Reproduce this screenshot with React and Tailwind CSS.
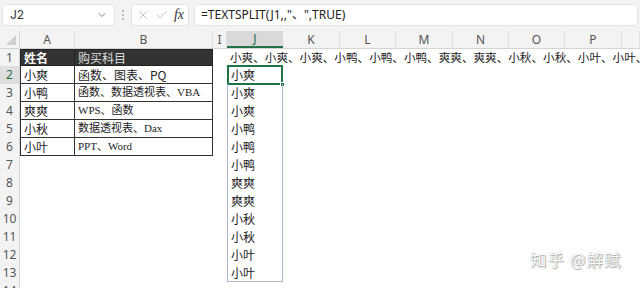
import { ChevronDown, X, Check } from 'lucide-react';

const cols = [
    { key: 'A', w: 'w-[55px]' },
    { key: 'B', w: 'w-[138px]' },
    { key: 'I', w: 'w-[14px]' },
    { key: 'J', w: 'w-[56px]' },
    { key: 'K', w: 'w-[57px]' },
    { key: 'L', w: 'w-[56px]' },
    { key: 'M', w: 'w-[57px]' },
    { key: 'N', w: 'w-[56px]' },
    { key: 'O', w: 'w-[56px]' },
    { key: 'P', w: 'w-[57px]' },
    { key: 'Q', w: 'flex-1' },
];

const table = [
    ['小爽', '函数、图表、PQ', false],
    ['小鸭', '函数、数据透视表、VBA', true],
    ['爽爽', 'WPS、函数', true],
    ['小秋', '数据透视表、Dax', true],
    ['小叶', 'PPT、Word', true],
];

const spill = ['小爽', '小爽', '小爽', '小鸭', '小鸭', '小鸭', '爽爽', '爽爽', '小秋', '小秋', '小叶', '小叶'];

const cjk = "font-['Noto_Sans_CJK_SC','Noto_Sans',sans-serif]";

export default function App() {
    const rows = Array.from({ length: 14 }, (_, i) => i + 1);

    return (
        <div className={`w-[640px] h-[288px] overflow-hidden bg-white relative ${cjk}`}>
            {/* Formula bar */}
            <div className="h-[31px] bg-[#f3f3f3] flex items-center gap-[5px] px-[2px] pb-[2px]">
                <div className="w-[113px] h-[22px] bg-white rounded-[3px] border border-[#e3e3e3] flex items-center justify-between pl-[7px] pr-[6px]">
                    <span className="text-[12px] text-[#333] font-['Inter',sans-serif]">J2</span>
                    <ChevronDown className="w-[12px] h-[12px] text-[#555]" strokeWidth={1.5} />
                </div>
                <div className="flex flex-col gap-[2px] px-[2px]">
                    <span className="w-[2px] h-[2px] bg-[#aaa] rounded-full" />
                    <span className="w-[2px] h-[2px] bg-[#aaa] rounded-full" />
                    <span className="w-[2px] h-[2px] bg-[#aaa] rounded-full" />
                </div>
                <div className="w-[58px] h-[22px] bg-white rounded-[3px] border border-[#e3e3e3] flex items-center gap-[5px] px-[4px]">
                    <X className="w-[14px] h-[14px] text-[#aaa]" strokeWidth={1.2} />
                    <Check className="w-[14px] h-[14px] text-[#aaa]" strokeWidth={1.2} />
                    <span className="text-[14px] italic text-[#333] font-['Liberation_Serif',serif] leading-none">fx</span>
                </div>
                <div className="flex-1 h-[22px] bg-white rounded-[3px] border border-[#e3e3e3] flex items-center pl-[6px]">
                    <span className="text-[12px] text-[#222] font-['Noto_Sans','Noto_Sans_CJK_SC',sans-serif]">=TEXTSPLIT(J1,,"、",TRUE)</span>
                </div>
            </div>

            {/* Column headers */}
            <div className="flex h-[18px] bg-[#f3f3f3] border-b border-[#d4d4d4]">
                <div className="w-[20px] flex items-end justify-end pr-[3px] pb-[3px] border-r border-[#d4d4d4]">
                    <div className="w-0 h-0 border-l-[10px] border-l-transparent border-b-[10px] border-b-[#cfcfcf]" />
                </div>
                {cols.map((c) => (
                    <div
                        key={c.key}
                        className={`${c.w} shrink-0 flex items-center justify-center text-[12px] font-['Noto_Sans',sans-serif] ${
                            c.key === 'J'
                                ? 'bg-[#d9d9d9] text-[#1e6b41] border-b-2 border-[#217346]'
                                : 'text-[#555] border-r border-[#e0e0e0]'
                        }`}
                    >
                        {c.key === 'Q' ? '' : c.key}
                    </div>
                ))}
            </div>

            {/* Rows */}
            {rows.map((r) => (
                <div key={r} className={`flex ${r === 1 ? 'h-[17px]' : 'h-[18px]'}`}>
                    <div
                        className={`w-[20px] shrink-0 flex items-center justify-center text-[12px] font-['Noto_Sans',sans-serif] border-r border-[#d4d4d4] ${
                            r === 2 ? 'bg-[#dedede] text-[#1e6b41]' : 'bg-[#f3f3f3] text-[#555]'
                        }`}
                    >
                        {r}
                    </div>
                    <CellA r={r} />
                    <CellB r={r} />
                    <div className="w-[14px] shrink-0" />
                    <CellJ r={r} />
                    <div className="flex-1" />
                </div>
            ))}

            {/* Watermark */}
            <div className="absolute right-[18px] bottom-[17px] text-[16px] text-white tracking-[1.5px] [text-shadow:0_0_1px_#888,1px_1px_1px_#aaa]">
                知乎 @解赋
            </div>
        </div>
    );
}

function CellA({ r }) {
    if (r === 1) {
        return (
            <div className="w-[55px] shrink-0 bg-[#333] border-l border-r border-t border-b border-[#222] flex items-center pl-[3px] text-[12px] font-bold text-white">
                姓名
            </div>
        );
    }
    if (r <= 6) {
        return (
            <div className="w-[55px] shrink-0 border-l border-r border-b border-[#333] flex items-center pl-[3px] text-[12px] text-[#222]">
                {table[r - 2][0]}
            </div>
        );
    }
    return <div className="w-[55px] shrink-0" />;
}

function CellB({ r }) {
    if (r === 1) {
        return (
            <div className="w-[138px] shrink-0 bg-[#333] border-r border-t border-b border-[#222] flex items-center pl-[3px] text-[12px] text-[#ddd]">
                购买科目
            </div>
        );
    }
    if (r <= 6) {
        const [, text, serif] = table[r - 2];
        return (
            <div
                className={`w-[138px] shrink-0 border-r border-b border-[#333] flex items-center pl-[3px] whitespace-nowrap text-[#222] ${
                    serif ? "text-[11px] font-['Liberation_Serif','Noto_Sans_CJK_SC',serif]" : 'text-[12px]'
                }`}
            >
                {text}
            </div>
        );
    }
    return <div className="w-[138px] shrink-0" />;
}

function CellJ({ r }) {
    if (r === 1) {
        return (
            <div className="w-[56px] shrink-0 flex items-center pl-[3px] whitespace-nowrap overflow-visible text-[11.6px] text-[#222]">
                小爽、小爽、小爽、小鸭、小鸭、小鸭、爽爽、爽爽、小秋、小秋、小叶、小叶、
            </div>
        );
    }
    if (r <= 13) {
        return (
            <div
                className={`w-[56px] shrink-0 relative flex items-center pl-[3px] text-[12px] text-[#222] border-l border-r border-[#a9b9d3] ${
                    r === 13 ? 'border-b' : ''
                }`}
            >
                {spill[r - 2]}
                {r === 2 && (
                    <>
                        <div className="absolute -left-[1px] -top-[1px] -right-[1px] -bottom-[1px] border-2 border-[#217346]" />
                        <div className="absolute -right-[3px] -bottom-[3px] w-[5px] h-[5px] bg-[#217346] border border-white" />
                    </>
                )}
            </div>
        );
    }
    return <div className="w-[56px] shrink-0" />;
}
